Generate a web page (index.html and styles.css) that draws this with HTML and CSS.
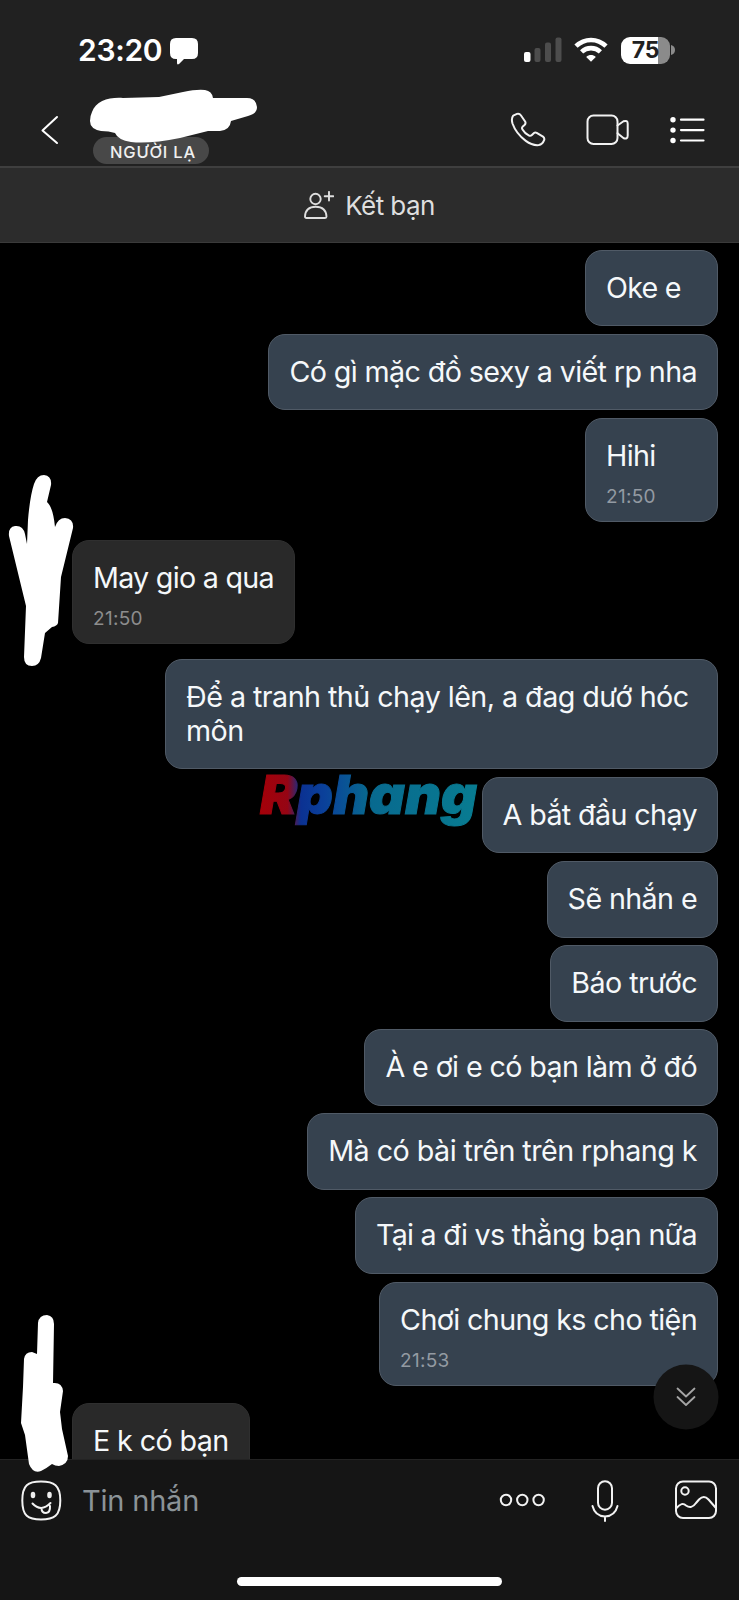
FILE: index.html
```html
<!DOCTYPE html>
<html lang="vi">
<head>
<meta charset="utf-8">
<title>Tin nhắn</title>
<link rel="stylesheet" href="styles.css">
</head>
<body>
<div class="phone">
  <header class="top">
    <div class="status">
      <span class="clock">23:20</span>
      <svg class="bubble-icon" width="28" height="27" viewBox="0 0 28 27"><path d="M6 0h16q6 0 6 6v9q0 6-6 6h-8l-5 5q-2 1.200-2-1v-4h-1q-6 0-6-6V6q0-6 6-6z" fill="#fff"/></svg>
      <svg class="signal" width="39" height="26" viewBox="0 0 39 26"><rect x="1" y="15" width="6.500" height="10" rx="2" fill="#fff"/><g fill="#4d4d4d"><rect x="11.500" y="11" width="6" height="14" rx="2"/><rect x="22" y="5.500" width="6" height="19.500" rx="2"/><rect x="32.500" y=".5" width="6" height="24.500" rx="2"/></g></svg>
      <svg class="wifi" width="34" height="26" viewBox="0 0 34 26"><g fill="none" stroke="#fff" stroke-width="4.600"><path d="M2 9.200C10.500.9 23.500.9 32 9.200"/><path d="M7.600 14.900c5.300-5 13.500-5 18.800 0"/></g><path d="M17 24.800l-4.800-4.900c2.800-2.500 6.800-2.500 9.600 0z" fill="#fff"/></svg>
      <span class="battery"><b>75</b></span>
      <svg class="cap" width="4" height="10" viewBox="0 0 4 10"><path d="M0 0q4 1 4 5T0 10z" fill="#8b8b8b"/></svg>
    </div>
    <nav class="bar">
      <svg class="back" width="18" height="30" viewBox="0 0 18 30"><path d="M16 2L1.500 15.500l14.500 12.500" fill="none" stroke="#fff" stroke-width="2" stroke-linecap="round" stroke-linejoin="round"/></svg>
      <div class="who"><span class="tag">NGƯỜI LẠ</span>
        <svg class="scribble-name" width="170" height="56" viewBox="0 0 170 56"><path d="M3 23C7 12 20 8 34 9L70 8L94 3Q108 0 116 1Q123 2 124 9L158 9Q167 9 168 18Q168 25 159 27L142 32Q141 41 131 42L119 42L91 49Q61 55 42 53Q29 51 26 44Q20 42 12 42Q1 40 1 32Q1 27 3 23Z" fill="#fff"/></svg>
      </div>
      <svg class="ico call" width="36" height="36" viewBox="0 0 36 36"><path d="M3.200 3.600L7 1.900Q9.500 1.300 11 3.500l4.300 6.300Q16 11.500 14.500 13l-2 1.800q-1 1.200 0 2.700 2.400 4.200 6.600 6.100 1.500.7 2.800-.6l2.100-2q1.200-1 2.700-.2l6.300 3.800q2 1.500 1 3.800-1.500 4-5.200 4.700-6.500.7-13-4.200Q6 21.500 2.500 11.500 1 6.500 3.200 3.600z"/></svg>
      <svg class="ico video" width="44" height="32" viewBox="0 0 44 32"><rect x="1.500" y="1.500" width="30" height="28.500" rx="6"/><path d="M31.500 11.500l6-4.200q4.200-1.500 4.200 2.500v11.700q0 4-4 2.700l-6.200-5"/></svg>
      <svg class="menu" width="35" height="28" viewBox="0 0 35 28"><g fill="#fff"><circle cx="3" cy="3.700" r="2.700"/><circle cx="3" cy="14.100" r="2.700"/><circle cx="3" cy="24.500" r="2.700"/></g><path d="M11 3.700h22.500M11 14.100h22.500M11 24.500h22.500" stroke="#fff" stroke-width="2.200" stroke-linecap="round"/></svg>
    </nav>
  </header>
  <div class="friend">
    <svg width="30" height="29" viewBox="0 0 30 29" fill="none" stroke="#dedede" stroke-width="1.900" stroke-linecap="round" stroke-linejoin="round"><circle cx="11.500" cy="8" r="5.200"/><path d="M1 25.500Q1.500 15.800 11.700 15.800T22.500 25.500Q22.500 27 21 27H2.500Q1 27 1 25.500zM25 .9v8.600M20.700 5.200h8.600"/></svg>
    <span>Kết bạn</span>
  </div>
  <main class="chat">
    <div class="msg out short tight"><p>Oke e</p></div>
    <div class="msg out"><p>Có gì mặc đồ sexy a viết rp nha</p></div>
    <div class="msg out short timed"><p>Hihi</p><time>21:50</time></div>
    <div class="msg in timed tight"><p>May gio a qua</p><time>21:50</time></div>
    <div class="msg out wide loose"><p>Để a tranh thủ chạy lên, a đag dướ hóc<br>môn</p></div>
    <div class="msg out"><p>A bắt đầu chạy</p></div>
    <div class="msg out"><p>Sẽ nhắn e</p></div>
    <div class="msg out loose"><p>Báo trước</p></div>
    <div class="msg out"><p>À e ơi e có bạn làm ở đó</p></div>
    <div class="msg out loose"><p>Mà có bài trên trên rphang k</p></div>
    <div class="msg out tight"><p>Tại a đi vs thằng bạn nữa</p></div>
    <div class="msg out timed"><p>Chơi chung ks cho tiện</p><time>21:53</time></div>
    <div class="msg in last timed"><p>E k có bạn</p></div>
    <svg class="watermark" width="226" height="70" viewBox="0 -8 226 70"><defs><linearGradient id="wm" gradientUnits="userSpaceOnUse" x1="0" y1="0" x2="220" y2="0"><stop offset="0" stop-color="#a50008"/><stop offset=".13" stop-color="#950514"/><stop offset=".19" stop-color="#0b3192"/><stop offset=".3" stop-color="#0a419a"/><stop offset=".5" stop-color="#08698f"/><stop offset="1" stop-color="#087c91"/></linearGradient></defs><text x="1" y="45" textLength="217" lengthAdjust="spacingAndGlyphs" fill="url(#wm)" stroke="url(#wm)">Rphang</text></svg>
    <svg class="scribble-a" width="66" height="192" viewBox="0 0 66 192"><path d="M26 9Q29 0 36 0Q44 1 43 10L39 27Q45 32 47 52Q50 43 57 43Q66 44 65 53L53 102L50 148Q49 151 44 152L37 158L33 183Q31 191 24 191Q16 191 16 182L18 131L1 61Q0 52 7 51Q15 50 17 59L19 69L20 45Q22 21 26 9Z" fill="#fff"/></svg>
  </main>
  <footer class="composer">
    <svg class="ico smile" width="42" height="42" viewBox="0 0 42 42"><path d="M20 1.500C33 1.500 39.300 5 39.300 20.500S33 39.500 20 39.500 1.300 36 1.300 20.500 7 1.500 20 1.500z"/><g fill="#eee" stroke="none"><ellipse cx="12" cy="15" rx="2.300" ry="3.200"/><ellipse cx="28.500" cy="15" rx="2.300" ry="3.200"/></g><path d="M11.500 23.500Q20 32.500 29.500 23M20.500 28q0 5 4.500 5 4.500-.5 4-7"/></svg>
    <span class="hint">Tin nhắn</span>
    <svg class="ico dots" width="46" height="14" viewBox="0 0 46 14"><circle cx="7" cy="7" r="5.200"/><circle cx="23.300" cy="7" r="5.200"/><circle cx="39.600" cy="7" r="5.200"/></svg>
    <svg class="ico mic" width="28" height="42" viewBox="0 0 28 42"><rect x="7" y="1.200" width="14" height="28.500" rx="7"/><path d="M1.500 26Q4 36 14 36.500 24 36 26.500 26M14 36.500v4.500"/></svg>
    <svg class="ico photo" width="42" height="40" viewBox="0 0 42 40"><rect x="1" y="1.500" width="40" height="36.500" rx="7"/><circle cx="10" cy="11" r="3.700"/><path d="M1.500 28Q7 21.500 11 25.500 16.500 29.500 21 23L24 19.500Q29 14.500 33.500 19.500L40.500 27.500"/></svg>
    <i class="home"></i>
    <svg class="down" width="66" height="66" viewBox="0 0 66 66"><circle cx="33" cy="33" r="32.500" fill="#151515"/><path d="M24.500 24.500l8.500 8 8.500-8M24.500 33l8.500 8 8.500-8" fill="none" stroke="#a5a5a5" stroke-width="1.800" stroke-linecap="round" stroke-linejoin="round"/></svg>
    <svg class="scribble-b" width="48" height="158" viewBox="0 0 48 158"><path d="M17 8Q18 0 26 0Q33 1 33 9L32 68Q41 67 42 76L39 97L41 114L47 141Q47 149 38 151Q34 151 31 149Q26 153 20 156Q12 159 8 149L4 120L0 108L2 72L3 44Q4 37 11 37L16 39Z" fill="#fff"/></svg>
  </footer>
</div>
</body>
</html>
```
FILE: styles.css
```css
* { box-sizing: border-box; }
body { margin: 0; background: #000; font-family: Inter, "Liberation Sans", sans-serif; color: #f5f8fa; }
.phone { width: 739px; height: 1600px; display: flex; flex-direction: column; overflow: hidden; }
svg { display: block; flex: none; }
.ico { fill: none; stroke: #f2f2f2; stroke-width: 2; stroke-linecap: round; stroke-linejoin: round; }

.top { flex: none; height: 166px; background: #212121; }
.status { height: 98px; display: flex; align-items: center; padding: 2px 64px 0 78px; }
.clock { font-size: 30px; font-weight: 600; letter-spacing: -.3px; color: #fff; width: 92px; white-space: nowrap; }
.bubble-icon { margin: 2px 325px 0 0; }
.signal { margin-right: 12px; }
.wifi { margin-right: 13px; }
.battery { width: 49px; height: 27px; border-radius: 9px; background: linear-gradient(90deg, #fff 75%, #8b8b8b 75%); color: #212121; font-size: 23px; line-height: 27px; text-align: center; letter-spacing: -.3px; }
.battery b { font-weight: 700; }
.cap { margin-left: 1px; }
.bar { height: 68px; display: flex; align-items: flex-start; padding-left: 41px; }
.back { margin-top: 17px; }
.who { position: relative; margin: 39px 0 0 34px; width: 116px; }
.tag { display: block; height: 27px; border-radius: 14px; background: #484848; font-size: 16.500px; line-height: 31px; font-weight: 500; letter-spacing: .8px; padding-left: 17px; white-space: nowrap; color: #f0f0f0; }
.scribble-name { position: absolute; left: -4px; top: -48px; }
.call { margin: 14px 0 0 301px; }
.video { margin: 16px 0 0 40px; }
.menu { margin: 18px 0 0 40px; }

.friend { flex: none; height: 77px; background: #2c2c2c; border-top: 2px solid #3f3f3f; border-bottom: 1px solid #3a3a3a; display: flex; justify-content: center; align-items: center; gap: 11px; font-size: 26px; letter-spacing: -.55px; color: #dedede; }

.chat { flex: none; position: relative; height: 1216px; overflow: hidden; padding: 7px 21px 0 72px; display: flex; flex-direction: column; }
.msg { flex: none; height: 76.400px; margin-bottom: 7.700px; border: 1px solid #505a66; border-radius: 17px; background: #36424f; padding: 20px 20px 0; white-space: nowrap; letter-spacing: -.62px; }
.out { align-self: flex-end; }
.in { align-self: flex-start; background: #292929; border-color: #2f2f2f; margin: 10px 0 15px; }
.tight { letter-spacing: -.74px; }
.loose { letter-spacing: -.54px; }
.msg p { margin: 0; font-size: 28.700px; line-height: 34px; }
.msg time { display: block; margin-top: 14px; font-size: 19px; line-height: 20px; letter-spacing: .3px; color: #939aa2; }
.in time { color: #8d8d8d; }
.short { width: 133px; }
.timed { height: 104.200px; }
.wide { width: 553px; height: 110.200px; }
.last { margin-top: 10px; }
.watermark { position: absolute; left: 259px; top: 518px; font: italic 900 54px Inter, sans-serif; stroke-width: 1; }
.scribble-a { position: absolute; left: 8px; top: 232px; }

.composer { flex: none; position: relative; height: 141px; border-top: 1px solid #232323; background: #151515; display: flex; align-items: flex-start; padding-left: 21px; }
.smile { margin-top: 20px; }
.hint { margin: 22px 0 0 19px; width: 395px; font-size: 29px; line-height: 38px; letter-spacing: -.2px; color: #8b9398; }
.dots { margin: 33px 0 0 22px; }
.mic { margin: 20px 0 0 46px; }
.photo { margin: 20px 0 0 56px; }
.home { position: absolute; left: 237px; top: 117px; width: 265px; height: 9px; border-radius: 5px; background: #fff; }
.down { position: absolute; left: 653px; top: -96px; }
.scribble-b { position: absolute; left: 21px; top: -145px; }
```
